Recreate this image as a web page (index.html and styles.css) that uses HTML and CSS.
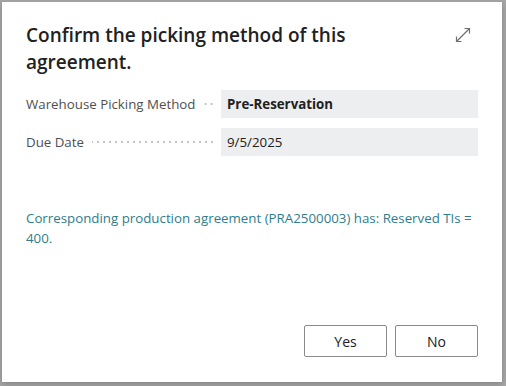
FILE: index.html
```html
<!DOCTYPE html>
<html lang="en">
<head>
  <meta charset="UTF-8">
  <title>Confirm picking method</title>
  <link rel="stylesheet" href="styles.css">
</head>
<body>
  <div class="dialog">
    <div class="dialog-header">
      <h1>Confirm the picking method of this agreement.</h1>
      <button class="expand" title="Expand">
        <svg width="18" height="18" viewBox="0 0 18 18" fill="none" stroke="#707070" stroke-width="1.2">
          <path d="M2.5 15.5L15.5 2.5"></path>
          <path d="M10.5 2.5h5v5"></path>
          <path d="M2.5 10.5v5h5"></path>
        </svg>
      </button>
    </div>

    <div class="fields">
      <div class="field">
        <label class="field-label"><span>Warehouse Picking Method</span><i class="leader"></i></label>
        <div class="field-value bold">Pre-Reservation</div>
      </div>
      <div class="field">
        <label class="field-label"><span>Due Date</span><i class="leader"></i></label>
        <div class="field-value">9/5/2025</div>
      </div>
    </div>

    <p class="note">Corresponding production agreement (PRA2500003) has: Reserved TIs = 400.</p>

    <div class="actions">
      <button class="btn">Yes</button>
      <button class="btn">No</button>
    </div>
  </div>
</body>
</html>
```

FILE: styles.css
```css
:root {
  --text: #212121;
  --label: #505050;
  --field: #edeef0;
  --teal: #2f7d8c;
  --border: #8a8a8a;
}

* {
  margin: 0;
  padding: 0;
  box-sizing: border-box;
}

body {
  font-family: 'Open Sans', sans-serif;
  background: #a6a6a6;
  color: var(--text);
  width: 506px;
  height: 386px;
  padding: 2px 4px 4px 2px;
}

.dialog {
  background: white;
  width: 500px;
  height: 380px;
  display: flex;
  flex-direction: column;
  padding: 0 24px 25px 24px;
  box-shadow: 0 2px 6px rgba(0,0,0,0.2);
}

.dialog-header {
  display: flex;
  align-items: flex-start;
  justify-content: space-between;
  padding-top: 20px;
}

h1 {
  font-size: 19px;
  font-weight: 600;
  line-height: 27px;
  width: 330px;
}

.expand {
  background: none;
  border: none;
  margin-top: 4px;
  margin-right: 6px;
  cursor: pointer;
}

.fields {
  margin-top: 14px;
  display: flex;
  flex-direction: column;
  gap: 10px;
}

.field {
  display: flex;
  align-items: center;
  height: 28px;
}

.field-label {
  width: 195px;
  display: flex;
  align-items: center;
  font-size: 13.3px;
  color: var(--label);
}

.leader {
  flex: 1;
  height: 4px;
  margin: 0 6px 0 8px;
  background-image: radial-gradient(circle, #c4c4c4 0.9px, transparent 1.2px);
  background-size: 6px 4px;
  background-repeat: repeat-x;
  background-position: right center;
}

.field-value {
  flex: 1;
  height: 28px;
  background: var(--field);
  font-size: 13.3px;
  line-height: 28px;
  padding: 0 6px;
}

.bold {
  font-weight: 700;
}

.note {
  margin-top: 52px;
  font-size: 13.3px;
  line-height: 20px;
  color: var(--teal);
  padding-right: 4px;
}

.actions {
  margin-top: auto;
  display: flex;
  justify-content: flex-end;
  gap: 8px;
}

.btn {
  width: 83px;
  height: 32px;
  background: white;
  border: 1px solid var(--border);
  border-radius: 2px;
  font-family: inherit;
  font-size: 14px;
  color: var(--text);
  cursor: pointer;
}
```
